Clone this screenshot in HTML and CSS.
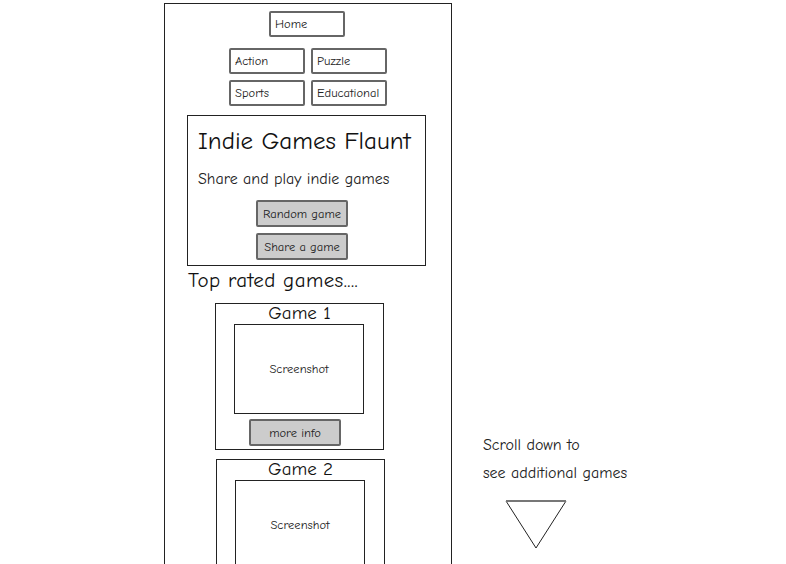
FILE: index.html
```html
<!DOCTYPE html>
<html>
<head>
<meta charset="utf-8">
<link rel="stylesheet" href="styles.css">
</head>
<body>
<div class="page">
  <div class="frame">
    <div class="home-row"><div class="btn nav home">Home</div></div>
    <div class="cats">
      <div class="btn nav">Action</div>
      <div class="btn nav">Puzzle</div>
      <div class="btn nav">Sports</div>
      <div class="btn nav">Educational</div>
    </div>
    <div class="hero">
      <div class="hero-title">Indie Games Flaunt</div>
      <div class="hero-sub">Share and play indie games</div>
      <div class="hero-actions">
        <div class="btn gray">Random game</div>
        <div class="btn gray">Share a game</div>
      </div>
    </div>
    <div class="section-title">Top rated games....</div>
    <div class="card card1">
      <div class="card-title">Game 1</div>
      <div class="shot">Screenshot</div>
      <div class="btn gray more">more info</div>
    </div>
    <div class="card card2">
      <div class="card-title">Game 2</div>
      <div class="shot">Screenshot</div>
    </div>
  </div>
  <div class="note">
    <div class="note-line">Scroll down to</div>
    <div class="note-line">see additional games</div>
    <svg class="arrow" width="62" height="50" viewBox="0 0 62 50">
      <polygon points="1,1 61,1 31,48" fill="#fff" stroke="#222" stroke-width="1"/>
      <line x1="1" y1="1" x2="61" y2="1" stroke="#777" stroke-width="2"/>
    </svg>
  </div>
</div>
</body>
</html>
```
FILE: styles.css
```css
* { box-sizing: border-box; }
html, body { margin: 0; padding: 0; background: #fff; height: 100%; overflow: hidden; }
body {
  font-family: "Comic Sans MS", "Comic Neue", "Open Sans", sans-serif;
  color: #111;
}
.page {
  display: flex;
  align-items: flex-start;
  padding-left: 164px;
  padding-top: 3px;
  height: 564px;
  overflow: hidden;
}
.frame {
  width: 288px;
  height: 600px;
  border: 1px solid #222;
  padding-top: 7px;
  flex-shrink: 0;
}
.home-row { display: flex; justify-content: center; }
.btn {
  border: 2px solid #666;
  border-radius: 2px;
  font-size: 12.5px;
  display: flex;
  align-items: center;
  color: #222;
}
.nav { width: 76px; height: 26px; padding-left: 4px; background: #fff; }
.home { margin-left: -2px; }
.cats {
  display: grid;
  grid-template-columns: 76px 76px;
  column-gap: 6px;
  row-gap: 6px;
  justify-content: center;
  margin-top: 11px;
}
.hero {
  margin: 9px 0 0 22px;
  width: 239px;
  height: 151px;
  border: 1px solid #222;
  padding: 8px 0 0 10px;
}
.hero-title { font-size: 25px; line-height: 34px; color: #111; }
.hero-sub { font-size: 16px; line-height: 20px; margin-top: 11px; color: #222; }
.hero-actions {
  display: flex;
  flex-direction: column;
  gap: 6px;
  margin: 11px 0 0 58px;
}
.gray {
  width: 92px;
  height: 27px;
  background: #ccc;
  justify-content: center;
  font-size: 12.5px;
}
.section-title { font-size: 21px; line-height: 28px; margin: 0 0 0 23px; color: #111; letter-spacing: 0.4px; }
.card {
  width: 169px;
  border: 1px solid #222;
  display: flex;
  flex-direction: column;
}
.card1 { margin: 9px 0 0 50px; height: 147px; }
.card2 { margin: 9px 0 0 51px; height: 200px; }
.card-title { font-size: 19px; line-height: 19px; text-align: center; color: #111; }
.shot {
  margin: 1px 0 0 18px;
  width: 130px;
  height: 90px;
  border: 1px solid #222;
  display: flex;
  align-items: center;
  justify-content: center;
  font-size: 12.5px;
  color: #222;
}
.card2 .shot { height: 120px; padding-bottom: 30px; }
.more { margin: 5px 0 0 33px; }
.note {
  margin: 428px 0 0 31px;
  display: flex;
  flex-direction: column;
}
.note-line { font-size: 16px; line-height: 28px; color: #222; }
.arrow { margin: 13px 0 0 22px; }
```
